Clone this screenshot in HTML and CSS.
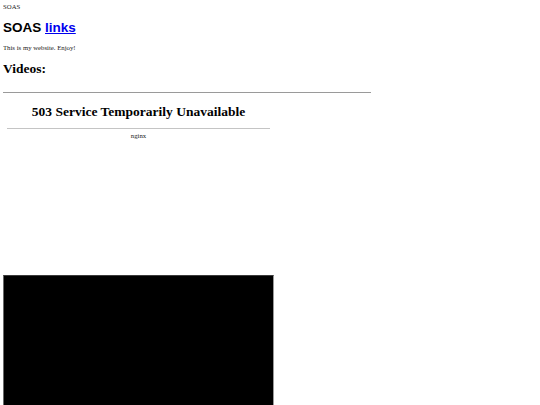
FILE: index.html
```html
<!DOCTYPE html>
<html>
<head>
<meta charset="utf-8">
<link rel="stylesheet" href="styles.css">
</head>
<body>
<div class="top">SOAS</div>
<h1 class="title">SOAS <a href="#">links</a></h1>
<p class="intro">This is my website. Enjoy!</p>
<h1 class="section">Videos:</h1>
<div class="rule"></div>
<div class="frame">
  <h1 class="err">503 Service Temporarily Unavailable</h1>
  <div class="err-rule"></div>
  <div class="server">nginx</div>
</div>
<div class="video"></div>
</body>
</html>
```
FILE: styles.css
```css
html {
  overflow: hidden;
  background: #fff;
}
body {
  margin: 3px;
  font-family: "Liberation Serif", "Times New Roman", serif;
  font-size: 6.75px;
  line-height: 8px;
  color: #1a1a1a;
}
.top {
  height: 8px;
}
.title {
  font-family: "Liberation Sans", Arial, sans-serif;
  font-size: 13.5px;
  line-height: 15px;
  font-weight: bold;
  margin: 9px 0;
  color: #000;
}
.title a {
  color: #0000ee;
  text-decoration: underline;
}
.intro {
  margin: 9px 0;
}
.section {
  font-size: 13.5px;
  line-height: 15px;
  font-weight: bold;
  margin: 9px 0 0 0;
  color: #000;
}
.rule {
  width: 368px;
  margin-top: 16px;
  border-top: 1px solid #9a9a9a;
}
.frame {
  width: 270px;
  height: 182px;
  box-sizing: border-box;
  padding: 0 3px 0 4px;
  overflow: hidden;
}
.err {
  font-size: 13.5px;
  line-height: 15px;
  font-weight: bold;
  text-align: center;
  margin: 11px 0 9px 0;
  color: #000;
}
.err-rule {
  border-top: 1px solid #c4c4c4;
}
.server {
  text-align: center;
  margin-top: 3px;
}
.video {
  width: 271px;
  height: 152px;
  box-sizing: border-box;
  background: #000;
  border: 1px solid;
  border-color: #3a3a3a #9a9a9a #9a9a9a #6a6a6a;
}
```
